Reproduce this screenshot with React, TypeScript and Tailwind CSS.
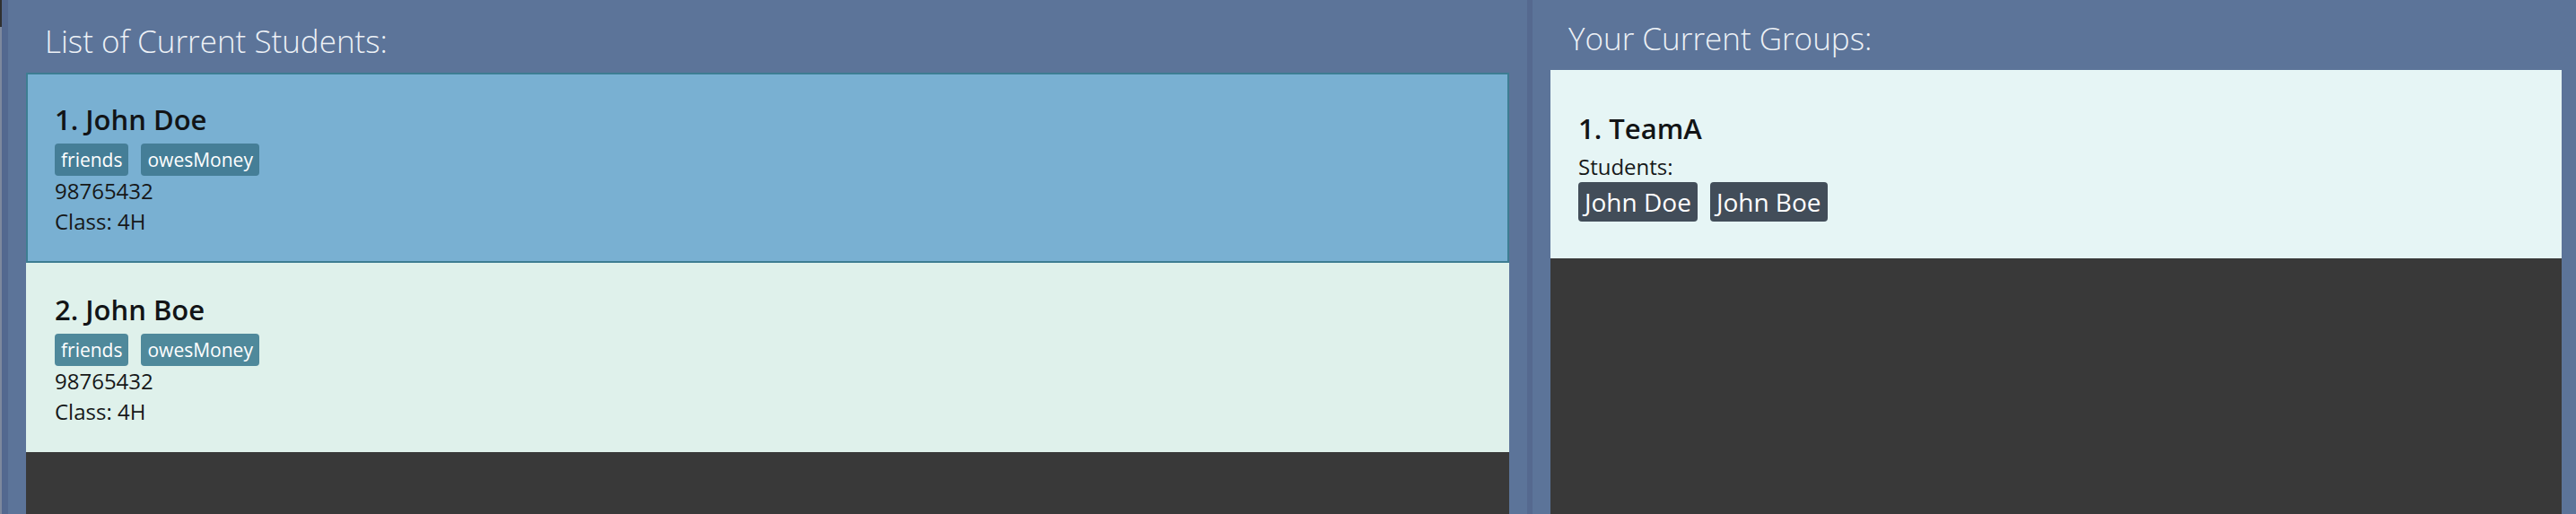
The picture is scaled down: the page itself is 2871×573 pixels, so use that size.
import React from "react";

type Student = { idx: number; name: string; tags: string[]; phone: string; cls: string };

const students: Student[] = [
  { idx: 1, name: "John Doe", tags: ["friends", "owesMoney"], phone: "98765432", cls: "4H" },
  { idx: 2, name: "John Boe", tags: ["friends", "owesMoney"], phone: "98765432", cls: "4H" },
];

function StudentCard({ s, selected }: { s: Student; selected: boolean }) {
  return (
    <div
      className={
        selected
          ? "h-[212px] border-2 border-[#3d7d92] bg-[#79b0d2] pl-[30px] pt-[32px]"
          : "h-[211px] border-2 border-[#dff1eb] bg-[#dff1eb] pl-[30px] pt-[32px]"
      }
    >
      <div className="text-[31px] font-semibold leading-[37px] text-[#121416]">
        {s.idx}. {s.name}
      </div>
      <div className="mt-[8px] flex gap-[14px]">
        {s.tags.map((t) => (
          <span
            key={t}
            className={
              selected
                ? "h-[36px] rounded-[4px] bg-[#457e97] px-[7px] text-[21px] leading-[36px] text-white"
                : "h-[36px] rounded-[4px] bg-[#4f899b] px-[7px] text-[21px] leading-[36px] text-white"
            }
          >
            {t}
          </span>
        ))}
      </div>
      <div className="text-[24px] leading-[34px] text-[#161819]">{s.phone}</div>
      <div className="text-[24px] leading-[34px] text-[#161819]">Class: {s.cls}</div>
    </div>
  );
}

export default function App() {
  return (
    <div className="flex h-[573px] w-[2871px] overflow-hidden bg-[#5c7499] font-['Open_Sans',sans-serif]">
      <div className="flex w-[9px] shrink-0 bg-[#53688f]">
        <div className="flex w-[2px] flex-col">
          <div className="h-[30px] bg-[#303030]" />
          <div className="flex-1 bg-[#7d889e]" />
        </div>
      </div>

      <section className="flex w-[1693px] shrink-0 flex-col px-[20px]">
        <header className="h-[81px] shrink-0 pl-[21px] pt-[28px] text-[35px] font-light leading-[36px] text-[#edf1f6]">
          List of Current Students:
        </header>
        <div className="flex-1 bg-[#393939]">
          {students.map((s, i) => (
            <StudentCard key={s.idx} s={s} selected={i === 0} />
          ))}
        </div>
      </section>

      <div className="w-[6px] shrink-0 bg-[#55698f]" />

      <section className="flex flex-1 flex-col pl-[20px] pr-[16px]">
        <header className="h-[78px] shrink-0 pl-[20px] pt-[25px] text-[35px] font-light leading-[36px] text-[#edf1f6]">
          Your Current Groups:
        </header>
        <div className="flex-1 bg-[#393939]">
          <div className="h-[210px] bg-[#e6f5f5] pl-[31px] pt-[47px]">
            <div className="text-[31px] font-semibold leading-[37px] text-[#121416]">1. TeamA</div>
            <div className="mt-[7px] text-[24px] leading-[34px] text-[#161819]">Students:</div>
            <div className="flex gap-[14px]">
              {["John Doe", "John Boe"].map((n) => (
                <span
                  key={n}
                  className="h-[44px] rounded-[4px] bg-[#424d59] px-[7px] text-[28px] leading-[44px] text-white"
                >
                  {n}
                </span>
              ))}
            </div>
          </div>
        </div>
      </section>
    </div>
  );
}
